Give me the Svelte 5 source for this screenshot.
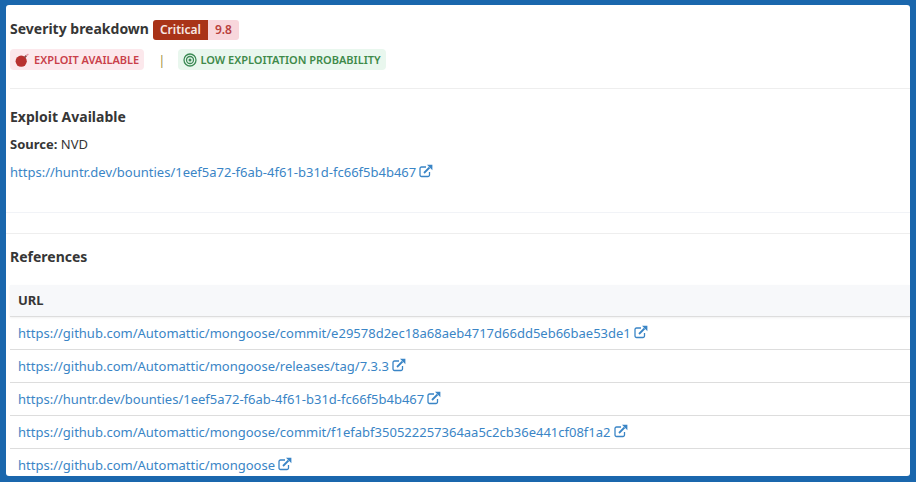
<script>
    const references = [
        "https://github.com/Automattic/mongoose/commit/e29578d2ec18a68aeb4717d66dd5eb66bae53de1",
        "https://github.com/Automattic/mongoose/releases/tag/7.3.3",
        "https://huntr.dev/bounties/1eef5a72-f6ab-4f61-b31d-fc66f5b4b467",
        "https://github.com/Automattic/mongoose/commit/f1efabf350522257364aa5c2cb36e441cf08f1a2",
        "https://github.com/Automattic/mongoose"
    ];
</script>

{#snippet external()}
    <svg class="ext" viewBox="0 0 14 14" aria-hidden="true">
        <path d="M10.5 8v3a1.5 1.5 0 0 1-1.5 1.5H2.5A1.5 1.5 0 0 1 1 11V4.5A1.5 1.5 0 0 1 2.5 3H7" fill="none" stroke="currentColor" stroke-width="1.3" />
        <path d="M5 9l5.5-5.5" fill="none" stroke="currentColor" stroke-width="1.8" />
        <path d="M8 0.8h5.4V6.2z" fill="currentColor" />
    </svg>
{/snippet}

<div class="frame">
    <section class="summary">
        <div class="severity">
            <h3>Severity breakdown</h3>
            <span class="score"><span class="label">Critical</span><span class="value">9.8</span></span>
        </div>
        <div class="tags">
            <span class="tag red">
                <svg viewBox="0 0 14 14" aria-hidden="true">
                    <circle cx="6.2" cy="8.2" r="5.6" fill="#b8312f" />
                    <path d="M9.4 4.6l2-2" stroke="#8a4a4a" stroke-width="1.7" />
                    <path d="M11.2 2.6l2.2-1.5" stroke="#e59aa5" stroke-width="1.3" />
                </svg>
                EXPLOIT AVAILABLE
            </span>
            <span class="sep">|</span>
            <span class="tag green">
                <svg viewBox="0 0 14 14" aria-hidden="true">
                    <circle cx="7" cy="7" r="6" fill="none" stroke="#3c8a55" stroke-width="1.3" />
                    <circle cx="7" cy="7" r="3.5" fill="none" stroke="#3c8a55" stroke-width="1.3" />
                    <circle cx="7" cy="7" r="1.5" fill="#3c8a55" />
                </svg>
                LOW EXPLOITATION PROBABILITY
            </span>
        </div>
    </section>

    <section class="exploit">
        <h3>Exploit Available</h3>
        <p class="source"><strong>Source:</strong> NVD</p>
        <a class="link" href="#top">https://huntr.dev/bounties/1eef5a72-f6ab-4f61-b31d-fc66f5b4b467{@render external()}</a>
    </section>

    <div class="spacer"></div>

    <section class="references">
        <h3>References</h3>
        <table>
            <thead>
                <tr><th>URL</th></tr>
            </thead>
            <tbody>
                {#each references as url}
                    <tr><td><a class="link" href="#top">{url}{@render external()}</a></td></tr>
                {/each}
            </tbody>
        </table>
    </section>
</div>

<style>
    :global(body) {
        margin: 0;
        background: #1a67ad;
    }

    .frame {
        box-sizing: border-box;
        width: 904px;
        height: 471px;
        margin: 5px 6px 6px;
        background: #fff;
        border-radius: 3px;
        overflow: hidden;
        font-family: "Noto Sans", sans-serif;
        font-size: 13px;
        color: #363636;
    }

    h3 {
        margin: 0;
        font-size: 14px;
        line-height: 20px;
        font-weight: 700;
    }

    .summary {
        margin-left: 4px;
        height: 84px;
        padding-top: 15px;
        box-sizing: border-box;
        border-bottom: 1px solid #eeeeee;
    }

    .severity {
        display: flex;
        align-items: flex-start;
        gap: 4px;
        height: 20px;
    }

    .severity h3 {
        line-height: 18px;
    }

    .score {
        display: flex;
        height: 20px;
        line-height: 20px;
        font-size: 12px;
        font-weight: 600;
        border-radius: 3px;
        overflow: hidden;
    }

    .label {
        padding: 0 7px;
        background: #a93318;
        color: #f8e8e4;
    }

    .value {
        padding: 0 7px;
        background: #f8d7dc;
        color: #b8403c;
    }

    .tags {
        display: flex;
        align-items: center;
        margin-top: 9px;
    }

    .tag {
        display: flex;
        align-items: center;
        height: 21px;
        padding: 0 5px;
        border-radius: 4px;
        font-size: 11px;
        font-weight: 600;
    }

    .tag svg {
        width: 14px;
        height: 14px;
    }

    .red {
        gap: 5px;
        background: #fce8ec;
        color: #c9404a;
    }

    .green {
        gap: 3px;
        background: #e9f7ee;
        color: #3f8a4a;
    }

    .sep {
        margin: 0 13px 0 14px;
        color: #a5913f;
        font-size: 13px;
        font-weight: 400;
    }

    .exploit {
        margin-left: 4px;
        height: 123px;
        padding-top: 18px;
        box-sizing: border-box;
    }

    .source {
        margin: 8px 0 0;
        line-height: 18px;
    }

    .source strong {
        font-weight: 700;
    }

    .exploit .link {
        display: block;
        margin-top: 10px;
    }

    .link {
        color: #3a85c6;
        text-decoration: none;
        line-height: 18px;
    }

    .ext {
        width: 14px;
        height: 14px;
        margin-left: 3px;
        vertical-align: -1px;
    }

    .spacer {
        height: 22px;
        border-top: 1px solid #f1f3f7;
        border-bottom: 1px solid #eeeeee;
        box-sizing: border-box;
    }

    .references {
        padding: 13px 0 0 4px;
    }

    table {
        width: 100%;
        margin-top: 18px;
        border-collapse: collapse;
    }

    th {
        height: 29px;
        padding: 0 8px 2px;
        text-align: left;
        font-size: 13px;
        font-weight: 700;
        background: #f7f8fa;
        border-bottom: 1px solid #dddddd;
        box-shadow: 0 1px 2px rgba(0, 0, 0, 0.06);
    }

    td {
        height: 32px;
        padding: 0 8px;
        border-bottom: 1px solid #dddddd;
    }
</style>
